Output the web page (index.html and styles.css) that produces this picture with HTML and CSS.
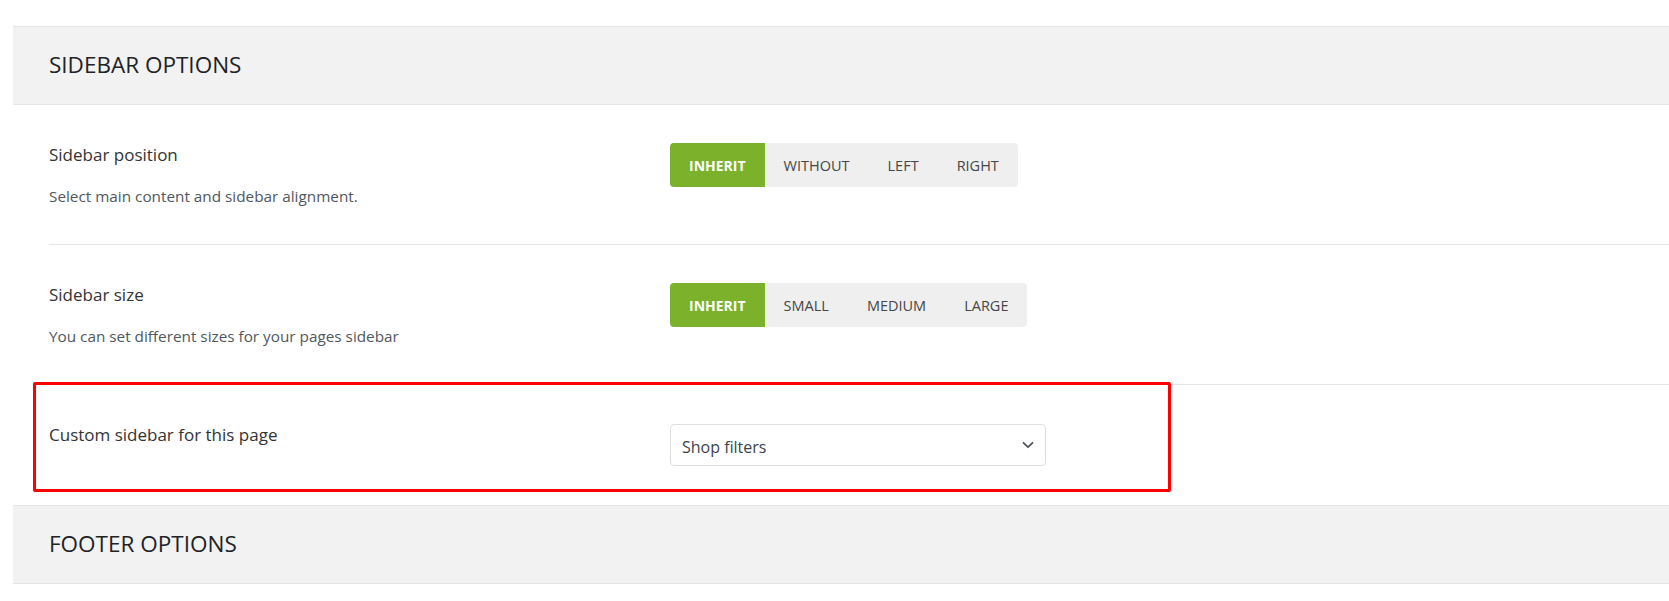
FILE: index.html
```html
<!DOCTYPE html>
<html lang="en">
<head>
<meta charset="utf-8">
<title>Sidebar options</title>
<link rel="stylesheet" href="styles.css">
</head>
<body>
<div class="panel">
  <div class="section-head"><h2>SIDEBAR OPTIONS</h2></div>

  <div class="row">
    <div class="row-label">
      <div class="label">Sidebar position</div>
      <div class="desc">Select main content and sidebar alignment.</div>
    </div>
    <div class="row-control">
      <div class="seg">
        <span class="seg-btn active">INHERIT</span>
        <span class="seg-btn">WITHOUT</span>
        <span class="seg-btn">LEFT</span>
        <span class="seg-btn">RIGHT</span>
      </div>
    </div>
  </div>

  <div class="row">
    <div class="row-label">
      <div class="label">Sidebar size</div>
      <div class="desc">You can set different sizes for your pages sidebar</div>
    </div>
    <div class="row-control">
      <div class="seg">
        <span class="seg-btn active">INHERIT</span>
        <span class="seg-btn">SMALL</span>
        <span class="seg-btn">MEDIUM</span>
        <span class="seg-btn">LARGE</span>
      </div>
    </div>
  </div>

  <div class="row row-last">
    <div class="row-label">
      <div class="label">Custom sidebar for this page</div>
    </div>
    <div class="row-control">
      <div class="select">
        <span class="select-text">Shop filters</span>
        <svg class="chev" width="14" height="14" viewBox="0 0 14 14"><path d="M2.5 4.8 L7 9.2 L11.5 4.8" fill="none" stroke="#50575e" stroke-width="1.8" stroke-linecap="round" stroke-linejoin="round"/></svg>
      </div>
    </div>
    <div class="highlight"></div>
  </div>

  <div class="section-head"><h2>FOOTER OPTIONS</h2></div>
</div>
</body>
</html>
```

FILE: styles.css
```css
html, body {
  margin: 0;
  padding: 0;
  background: #ffffff;
}

body {
  font-family: "Open Sans", "Noto Sans", sans-serif;
  color: #3c434a;
}

.panel {
  margin-left: 13px;
  padding-top: 26px;
}

.section-head {
  background: #f2f2f2;
  border-top: 1px solid #e4e4e4;
  border-bottom: 1px solid #e4e4e4;
  height: 77px;
  display: flex;
  align-items: center;
  padding-left: 36px;
}

.section-head h2 {
  margin: 0 0 2px;
  font-size: 22.5px;
  font-weight: 500;
  color: #1d2327;
}

.row {
  display: flex;
  margin-left: 36px;
  padding: 38px 0;
  border-bottom: 1px solid #e6e6e6;
  height: 63px;
}

.row-last {
  position: relative;
  border-bottom: none;
  height: 44px;
}

.row-label {
  width: 621px;
  flex: none;
}

.label {
  font-size: 17px;
  font-weight: 500;
  line-height: 24px;
  color: #333333;
}

.desc {
  margin-top: 19px;
  font-size: 15.3px;
  line-height: 20px;
  color: #50575e;
}

.row-control {
  display: flex;
  align-items: flex-start;
}

.seg {
  display: flex;
  background: #efefef;
  border-radius: 4px;
  overflow: hidden;
  height: 44px;
}

.seg-btn {
  display: flex;
  align-items: center;
  padding: 0 19px;
  font-size: 14.5px;
  color: #464646;
}

.seg-btn.active {
  background: #7cb12c;
  color: #ffffff;
  font-weight: 700;
  font-size: 14px;
}

.select {
  margin-top: 1px;
  height: 40px;
  border: 1px solid #dedede;
  border-radius: 4px;
  display: flex;
  align-items: center;
  justify-content: space-between;
  padding: 0 10px 0 11px;
  box-sizing: content-box;
  width: 353px;
}

.select-text {
  font-size: 16px;
  color: #3c434a;
  padding-top: 4px;
}

.chev {
  display: block;
}

.highlight {
  position: absolute;
  left: -16px;
  top: -3px;
  width: 1132px;
  height: 104px;
  border: 3px solid #ff0000;
  border-radius: 2px;
  pointer-events: none;
}
```
